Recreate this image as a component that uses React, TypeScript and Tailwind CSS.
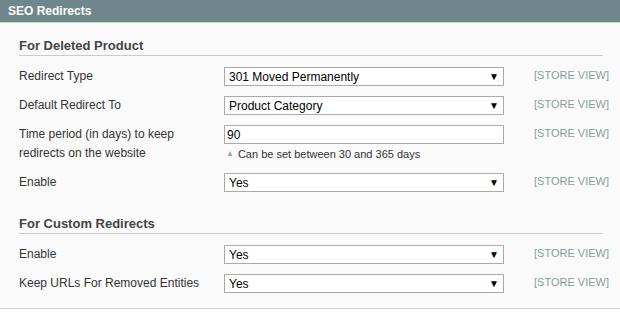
import React from "react";

const font = { fontFamily: '"Liberation Sans", Arial, sans-serif' };

function Select({ value }: { value: string }) {
  return (
    <div className="w-[280px] h-[19px] bg-white border border-[#aaaaaa] flex items-center justify-between pl-[4px] pr-[4px]">
      <span className="text-[12px] text-black leading-none">{value}</span>
      <span className="text-[10px] text-black leading-none">▼</span>
    </div>
  );
}

function StoreView() {
  return <div className="text-[11px] text-[#8c9ca1] leading-[16px]">[STORE VIEW]</div>;
}

function Row({ label, value }: { label: string; value: string }) {
  return (
    <div className="flex items-start h-[19px]">
      <div className="w-[205px] text-[12px] text-[#333] leading-[19px]">{label}</div>
      <Select value={value} />
      <div className="ml-[30px]">
        <StoreView />
      </div>
    </div>
  );
}

function Title({ children, className = "" }: { children: React.ReactNode; className?: string }) {
  return (
    <div className={`h-[19px] border-b border-[#cccccc] mr-[17px] text-[13px] font-bold text-[#444] leading-[18px] ${className}`}>
      {children}
    </div>
  );
}

export default function App() {
  return (
    <div className="w-[620px] h-[314px] bg-white" style={font}>
      <div className="h-[23px] bg-[#6f878c] border-b border-[#cfd6d8] pl-[8px] text-white text-[12px] font-bold leading-[22px]">
        SEO Redirects
      </div>
      <div className="bg-[#fafafa] pl-[19px] pt-[14px] border-b border-[#d2d2d2] pb-[15px]">
        <Title>For Deleted Product</Title>
        <div className="flex flex-col gap-[10px] mt-[11px]">
          <Row label="Redirect Type" value="301 Moved Permanently" />
          <Row label="Default Redirect To" value="Product Category" />
          <div className="flex items-start">
            <div className="w-[205px] text-[12px] text-[#333] leading-[19px]">
              Time period (in days) to keep
              <br />
              redirects on the website
            </div>
            <div className="w-[280px]">
              <div className="h-[19px] bg-white border border-[#aaaaaa] flex items-center pl-[2px]">
                <span className="text-[12px] text-black leading-none">90</span>
              </div>
              <div className="flex items-center mt-[4px] h-[12px]">
                <span className="text-[8px] text-[#a5a5a5] leading-none ml-[2px] mr-[4px]">▲</span>
                <span className="text-[11px] text-[#333] leading-none">Can be set between 30 and 365 days</span>
              </div>
            </div>
            <div className="ml-[30px]">
              <StoreView />
            </div>
          </div>
          <Row label="Enable" value="Yes" />
        </div>
        <Title className="mt-[23px]">For Custom Redirects</Title>
        <div className="flex flex-col gap-[10px] mt-[11px]">
          <Row label="Enable" value="Yes" />
          <Row label="Keep URLs For Removed Entities" value="Yes" />
        </div>
      </div>
    </div>
  );
}
